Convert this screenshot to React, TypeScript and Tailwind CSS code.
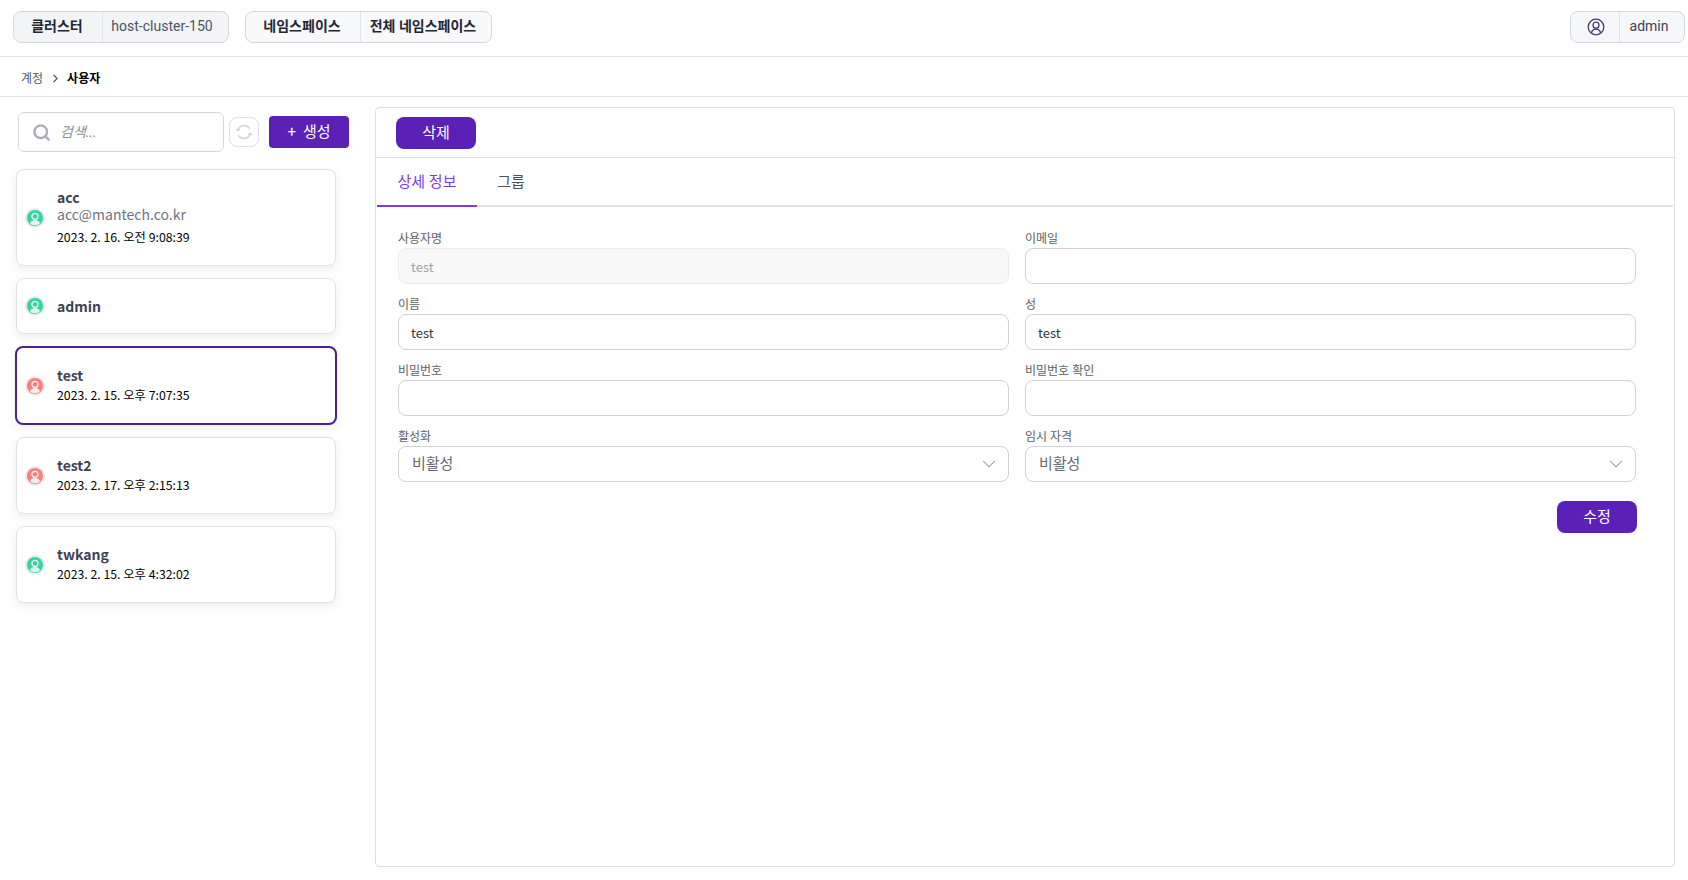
import React from 'react';
import { ChevronDown, ChevronRight, Search } from 'lucide-react';

const font = "font-['Roboto','Noto_Sans_CJK_KR',sans-serif]";
const noto = "font-['Noto_Sans_CJK_KR','Noto_Sans',sans-serif]";

interface UserItem {
  name: string;
  email?: string;
  date?: string;
  enabled: boolean;
  selected?: boolean;
  heightClass: string;
}

const users: UserItem[] = [
  { name: 'acc', email: 'acc@mantech.co.kr', date: '2023. 2. 16. 오전 9:08:39', enabled: true, heightClass: 'h-[97px]' },
  { name: 'admin', enabled: true, heightClass: 'h-[56px]' },
  { name: 'test', date: '2023. 2. 15. 오후 7:07:35', enabled: false, selected: true, heightClass: 'h-[79px]' },
  { name: 'test2', date: '2023. 2. 17. 오후 2:15:13', enabled: false, heightClass: 'h-[77px]' },
  { name: 'twkang', date: '2023. 2. 15. 오후 4:32:02', enabled: true, heightClass: 'h-[77px]' },
];

const UserAvatar = ({ enabled }: { enabled: boolean }) => (
  <span className="flex h-5 w-5 shrink-0 items-center justify-center rounded-full bg-[#e9ebee]">
    <svg viewBox="0 0 16 16" className={`h-4 w-4 ${enabled ? 'text-[#3ad29f]' : 'text-[#fb7e7e]'}`}>
      <circle cx="8" cy="8" r="8" fill="currentColor" />
      <circle cx="8" cy="6.3" r="3" fill="none" stroke="#fff" strokeWidth="1.3" opacity="0.9" />
      <path d="M3 13.2c.8-2.2 2.8-3.2 5-3.2s4.2 1 5 3.2c-1.3 1.3-3 2-5 2s-3.700-.7-5-2z" fill="#fff" opacity="0.85" />
    </svg>
  </span>
);

const UserCard = ({ user }: { user: UserItem }) => (
  <div
    className={`flex items-center bg-white rounded-lg shadow-[0_3px_8px_rgba(0,0,0,0.08)] ${noto} ${user.heightClass} ${
      user.selected ? 'border-2 border-[#4a2391] pl-[8px]' : 'mx-[1px] border border-[#e2e2e2] pl-[8px]'
    }`}
  >
    <UserAvatar enabled={user.enabled} />
    <div className={`ml-[12px] flex flex-col ${user.email ? 'pb-[2px]' : 'pb-[1px]'}`}>
      <span className="text-[14px] leading-[18px] font-bold text-[#3f4350]">{user.name}</span>
      {user.email && <span className="text-[14px] leading-[17px] text-[#6f7480]">{user.email}</span>}
      {user.date && (
        <span className={`text-[12.300px] leading-[18px] text-black ${user.email ? 'mt-[5px]' : 'mt-[2px]'}`}>{user.date}</span>
      )}
    </div>
  </div>
);

const HeaderGroup = ({ left, right, leftClass, rightClass, bg }: { left: React.ReactNode; right: React.ReactNode; leftClass: string; rightClass: string; bg: string }) => (
  <div className={`flex h-[32px] items-stretch rounded-lg border border-[#d4d8de] text-[14px] ${bg}`}>
    <div className={`flex items-center justify-center border-r border-[#dfe4ec] pb-[1px] ${leftClass}`}>{left}</div>
    <div className={`flex items-center justify-center pb-[1px] ${rightClass}`}>{right}</div>
  </div>
);

const Field = ({ label, value, disabled }: { label: string; value?: string; disabled?: boolean }) => (
  <div>
    <div className="h-[20px] text-[12px] leading-[20px] text-[#5c5f66]">{label}</div>
    <div
      className={`mt-[-1px] flex h-[36px] items-center rounded-lg border px-[12px] pt-[1px] text-[13px] ${noto} ${
        disabled ? 'border-[#ececec] bg-[#f8f8f8] text-[#a2a2a2]' : 'border-[#d2d2d2] bg-white text-[#33363d]'
      }`}
    >
      {value}
    </div>
  </div>
);

const SelectField = ({ label, value }: { label: string; value: string }) => (
  <div>
    <div className="h-[20px] text-[12px] leading-[20px] text-[#5c5f66]">{label}</div>
    <div className="mt-[-1px] flex h-[36px] items-center justify-between rounded-lg border border-[#d2d2d2] bg-white pl-[13px] pr-[8px] text-[15px] text-[#666a72]">
      <span>{value}</span>
      <ChevronDown className="h-[22px] w-[22px] text-[#8a8d93]" strokeWidth={1.1} />
    </div>
  </div>
);

export default function App() {
  return (
    <div className={`flex h-[880px] w-[1688px] flex-col overflow-hidden bg-white ${font}`}>
      {/* Top bar */}
      <header className="flex h-[57px] shrink-0 items-start justify-between border-b border-[#e4e4e4] pl-[13px] pr-[3px] pt-[11px]">
        <div className="flex gap-[16px]">
          <HeaderGroup
            bg="bg-[#f3f4f6]"
            left={<span className="font-bold">클러스터</span>}
            right="host-cluster-150"
            leftClass="w-[89px] pr-[2px] text-[#1f2733]"
            rightClass="w-[125px] pr-[7px] text-[#4b5563]"
          />
          <HeaderGroup
            bg="bg-[#f8f9fb]"
            left={<span className="font-bold">네임스페이스</span>}
            right={<span className="font-bold">전체 네임스페이스</span>}
            leftClass="w-[115px] pr-[2px] text-[#1f2733]"
            rightClass="w-[130px] pr-[6px] text-[#1f2733]"
          />
        </div>
        <HeaderGroup
          bg="bg-[#f6f7fa]"
          left={
            <svg viewBox="0 0 18 18" className="h-[18px] w-[18px] text-[#4a3b78]" fill="none" stroke="currentColor" strokeWidth="1.3">
              <circle cx="9" cy="9" r="7.8" />
              <circle cx="9" cy="7.2" r="3" />
              <path d="M4.4 14.800c.7-2.300 2.500-3.600 4.600-3.600s3.900 1.300 4.600 3.600" />
            </svg>
          }
          right="admin"
          leftClass="w-[49px] pl-[1px]"
          rightClass="w-[64px] pr-[6px] text-[#3f4350]"
        />
      </header>

      {/* Breadcrumb */}
      <div className="flex h-[40px] shrink-0 items-center border-b border-[#e4e4e4] pl-[21px] pt-[4px] text-[12px]">
        <span className="text-[#555a63]">계정</span>
        <ChevronRight className="ml-[6px] mr-[5px] h-[13px] w-[13px] text-[#555a63]" strokeWidth={2.25} />
        <span className="font-bold text-black">사용자</span>
      </div>

      <div className="flex min-h-0 flex-1 pb-[13px] pr-[13px]">
        {/* User list */}
        <aside className="w-[375px] shrink-0 pl-[15px]">
          <div className="mt-[15px] flex items-center pl-[3px]">
            <div className="flex h-[40px] w-[206px] items-center rounded-md border border-[#d8d8d8] pl-[13px]">
              <Search className="h-[19px] w-[19px] text-[#a9afb8]" strokeWidth={3} />
              <span className="ml-[9px] text-[14px] italic text-[#8b8f96]">검색...</span>
            </div>
            <div className="ml-[5px] flex h-[30px] w-[30px] items-center justify-center rounded-lg border border-[#dddddd]">
              <svg viewBox="0 0 18 18" className="h-[18px] w-[18px] text-[#d0d3d6]" fill="none" stroke="currentColor" strokeWidth="1.4">
                <path d="M2.800 7.500A6.500 6.500 0 0 1 14.600 5.600" />
                <path d="M15.200 10.500A6.500 6.500 0 0 1 3.400 12.400" />
                <path d="M1 5.800l1.800 1.900 2-1.700" />
                <path d="M17 12.200l-1.800-1.900-2 1.700" />
              </svg>
            </div>
            <button className="ml-[10px] flex h-[32px] w-[80px] items-center justify-center gap-[7px] rounded bg-[#5b21b6] text-[15px] text-white">
              <span>+</span>
              <span>생성</span>
            </button>
          </div>
          <div className="mt-[17px] flex w-[322px] flex-col gap-[12px]">
            {users.map((user) => (
              <UserCard key={user.name} user={user} />
            ))}
          </div>
        </aside>

        {/* Detail panel */}
        <main className="mt-[10px] flex-1 rounded border border-[#e0e0e0]">
          <div className="flex h-[50px] items-start border-b border-[#e0e0e0] pl-[20px] pt-[9px]">
            <button className="flex h-[32px] w-[80px] items-center justify-center rounded-lg bg-[#5b21b6] text-[15px] text-white">삭제</button>
          </div>
          <div className="mx-[1px] flex h-[49px] border-b-2 border-[#e2e2e2] pt-[1px] text-[15px]">
            <div className="mb-[-2px] flex w-[100px] items-center justify-center border-b-2 border-[#7c3aed] text-[#7c3aed]">상세 정보</div>
            <div className="flex w-[68px] items-center justify-center text-[#4f535c]">그룹</div>
          </div>
          <div className="pl-[22px] pr-[38px] pt-[22px]">
            <div className="grid grid-cols-2 gap-x-[16px] gap-y-[11px]">
              <Field label="사용자명" value="test" disabled />
              <Field label="이메일" />
              <Field label="이름" value="test" />
              <Field label="성" value="test" />
              <Field label="비밀번호" />
              <Field label="비밀번호 확인" />
              <SelectField label="활성화" value="비활성" />
              <SelectField label="임시 자격" value="비활성" />
            </div>
            <div className="mr-[-1px] mt-[19px] flex justify-end">
              <button className="flex h-[32px] w-[80px] items-center justify-center rounded-lg bg-[#5b21b6] text-[15px] text-white">수정</button>
            </div>
          </div>
        </main>
      </div>
    </div>
  );
}
